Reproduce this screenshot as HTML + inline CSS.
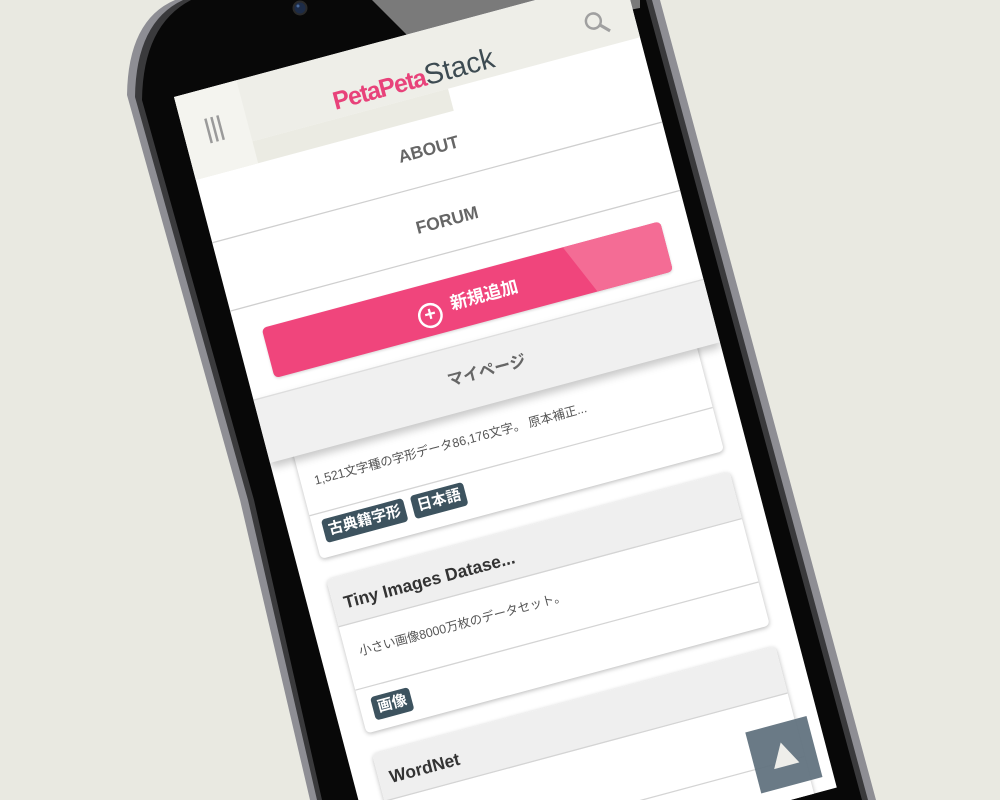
<!DOCTYPE html>
<html><head><meta charset="utf-8">
<style>
html,body{margin:0;padding:0;width:1000px;height:800px;overflow:hidden;}
body{background:#e9e9e1;position:relative;font-family:"Liberation Sans","Noto Sans CJK JP",sans-serif;}
svg.phone{position:absolute;left:0;top:0;}
#clip{position:absolute;left:0;top:0;width:1000px;height:800px;overflow:hidden;}
#scr{position:absolute;left:174px;top:97px;width:375px;height:665px;overflow:hidden;background:#fff;transform-origin:0 0;transform:matrix(1.2,-0.322,0.32,1.22,0,0);}
#scr div{position:absolute;box-sizing:border-box;}
.hdr{left:0;top:0;width:375px;height:50px;background:#eeeee8;}
.band{left:0;top:50px;width:215px;height:18px;background:#ebebe3;}
.ham{left:0;top:0;width:52px;height:68px;background:#f4f4ef;}
.bar{width:2px;height:20px;background:#9a9a9a;top:23px;}
.row{left:0;width:375px;border-bottom:1px solid #cfcfcf;text-align:center;color:#666;font-weight:bold;font-size:14px;}
.btn{left:21px;top:195px;width:332px;height:41px;background:#f0457c;border-radius:4px;overflow:hidden;box-shadow:0 1px 2px rgba(0,0,0,.15);}
.panel{left:0;top:248px;width:375px;height:52px;background:#f0f0f0;border-top:1px solid #ddd;box-shadow:0 4px 7px rgba(0,0,0,.22);text-align:center;line-height:50px;color:#666;font-weight:bold;font-size:13px;z-index:3;}
.card{left:20px;width:336px;height:126px;background:#fff;border-radius:4px;box-shadow:0 1px 4px rgba(0,0,0,.28);overflow:hidden;}
.ch{left:0;top:0;width:336px;height:39px;background:#efefef;border-bottom:1px solid #d4d4d4;font-weight:bold;font-size:14px;color:#333;padding:13px 0 0 9px;}
.cb{left:0;top:39px;width:336px;height:52px;border-bottom:1px solid #d4d4d4;font-size:10px;color:#555;padding:14px 0 0 11px;white-space:nowrap;}
.tag{top:99px;height:19px;background:#3d535f;color:#fff;font-weight:bold;font-size:12px;line-height:19px;padding:0 4px;border-radius:3px;}
.top{left:315px;top:604px;width:51px;height:50px;background:rgba(98,115,127,.95);z-index:5;}
</style></head><body>
<div id="clip">
<svg class="phone" width="1000" height="800" viewBox="0 0 1000 800">
<path d="M175,0 Q128,20 127,95 L240,500 L310,800 L876,800 L660,0 Z" fill="#8e8e94"/>
<path d="M183,0 Q136,22 135,97 L248,500 L317,800 L868,800 L652,0 Z" fill="#3a3a3c"/>
<path d="M191,0 Q143,25 142,100 L254,500 L322,800 L862,800 L646,0 Z" fill="#080808"/>
<polygon points="372,0 640,0 640,8 430,46 418,46" fill="#7a7a7a"/>
<circle cx="300" cy="8" r="6.5" fill="#1d2c48" stroke="#2a2a2a" stroke-width="2"/>
<circle cx="298" cy="6" r="1.5" fill="#4a6a9a"/>
</svg>
<div id="scr">
  <div class="hdr"></div>
  <div class="band"></div>
  <div class="ham"></div>
  <div class="bar" style="left:19px"></div>
  <div class="bar" style="left:24px"></div>
  <div class="bar" style="left:29px"></div>
  <div style="left:123px;top:20px;width:130px;height:30px;white-space:nowrap;font-size:22px;line-height:30px;">
    <span style="color:#e8427a;font-weight:bold;letter-spacing:-1px;font-size:20px;">PetaPeta</span><span style="color:#3d4b52;font-size:23px;">Stack</span>
  </div>
  <svg style="position:absolute;left:334px;top:20px" width="22" height="22" viewBox="0 0 22 22"><circle cx="8" cy="8" r="6" fill="none" stroke="#a0a0a0" stroke-width="2"/><line x1="12.5" y1="12.5" x2="19" y2="19" stroke="#a0a0a0" stroke-width="2.5"/></svg>
  <div class="row" style="top:68px;height:52px;line-height:48px;">ABOUT</div>
  <div class="row" style="top:120px;height:56px;line-height:60px;">FORUM</div>
  <div class="card" style="top:258px;">
    <div class="ch"></div>
    <div class="cb" style="padding-top:17px">1,521文字種の字形データ86,176文字。 原本補正...</div>
    <div class="tag" style="left:8px;top:96px;">古典籍字形</div>
    <div class="tag" style="left:82px;top:96px;">日本語</div>
  </div>
  <div class="card" style="top:401px;">
    <div class="ch">Tiny Images Datase...</div>
    <div class="cb">小さい画像8000万枚のデータセット。</div>
    <div class="tag" style="left:10px;">画像</div>
  </div>
  <div class="card" style="top:544px;">
    <div class="ch">WordNet</div>
    <div class="cb"></div>
  </div>
  <div class="panel">マイページ</div>
  <div class="btn" style="z-index:4">
    <div style="left:251px;top:0;width:81px;height:41px;background:#f46c95;clip-path:polygon(0 0,100% 0,100% 100%,18px 100%);"></div>
    <div style="left:0;top:0;width:332px;height:41px;text-align:center;color:#fff;font-weight:bold;font-size:14px;line-height:41px;">
      <span style="display:inline-block;width:16px;height:16px;border:2px solid #fff;border-radius:50%;line-height:15px;font-size:16px;vertical-align:-4px;margin-right:8px;">+</span>新規追加
    </div>
  </div>
  <div class="top"><svg style="position:absolute;left:14px;top:14px" width="23" height="21" viewBox="0 0 23 21"><polygon points="11.5,1 22,20 1,20" fill="#eeeeea"/></svg></div>
</div>
</div>
</body></html>
